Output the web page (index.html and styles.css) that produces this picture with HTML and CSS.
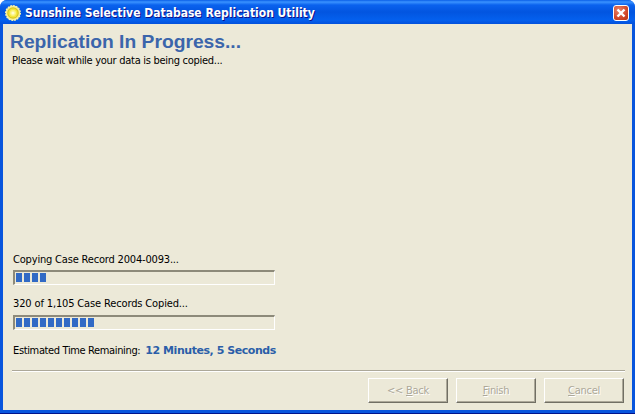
FILE: index.html
```html
<!DOCTYPE html>
<html lang="en">
<head>
<meta charset="utf-8">
<title>Sunshine Selective Database Replication Utility</title>
<link rel="stylesheet" href="styles.css">
</head>
<body>
<div class="window">
  <header class="titlebar">
    <svg class="app-icon" width="16" height="16" viewBox="0 0 16 16">
      <circle cx="8" cy="8" r="7.4" fill="#f4ec9a" stroke="#fff6a8" stroke-width="1.2" stroke-dasharray="1.6 1.3"/>
      <circle cx="8" cy="8" r="5.8" fill="#d9c81c"/>
      <circle cx="8" cy="8" r="4.6" fill="#f4e63c"/>
      <circle cx="8" cy="8" r="3" fill="#fbf47e"/>
      <circle cx="8" cy="8" r="1.6" fill="#fffbd0"/>
    </svg>
    <span class="title">Sunshine Selective Database Replication Utility</span>
    <span class="close">
      <svg width="10" height="10" viewBox="0 0 10 10"><path d="M1.5 1.5 L8.5 8.5 M8.5 1.5 L1.5 8.5" stroke="#fff" stroke-width="2.4" fill="none"/></svg>
    </span>
  </header>
  <main class="client">
    <h1 class="heading">Replication In Progress...</h1>
    <p class="subheading">Please wait while your data is being copied...</p>
    <section class="status">
      <p class="label label-first">Copying Case Record 2004-0093...</p>
      <div class="progress">
        <i></i><i></i><i></i><i></i>
      </div>
      <p class="label label-second">320 of 1,105 Case Records Copied...</p>
      <div class="progress">
        <i></i><i></i><i></i><i></i><i></i><i></i><i></i><i></i><i></i><i></i>
      </div>
      <p class="remaining">
        <span class="label label-time">Estimated Time Remaining:</span>
        <span class="time">12 Minutes, 5 Seconds</span>
      </p>
    </section>
    <footer class="footer">
      <button class="btn" disabled>&lt;&lt; <u>B</u>ack</button>
      <button class="btn" disabled><u>F</u>inish</button>
      <button class="btn" disabled><u>C</u>ancel</button>
    </footer>
  </main>
</div>
</body>
</html>
```
FILE: styles.css
```css
html, body {
  margin: 0;
  padding: 0;
  height: 100%;
  background: #fff;
  overflow: hidden;
}
.window {
  box-sizing: border-box;
  height: 414px;
  width: 635px;
  display: flex;
  flex-direction: column;
  background: #0855dd;
  border-radius: 7px 7px 0 0;
  padding: 0 3px 3px;
  border-bottom: 1px solid #00138c;
}
.titlebar {
  box-sizing: border-box;
  height: 24px;
  flex: none;
  margin: 0 -3px;
  padding: 2px 6px 0 5px;
  display: flex;
  align-items: center;
  gap: 4px;
  border-radius: 7px 7px 0 0;
  background: linear-gradient(#0a5fe8 0, #3a93ff 2px, #0a62ee 5px, #0255e0 12px, #0460ee 20px, #0351dc 24px);
}
.app-icon { flex: none; }
.title {
  flex: 1;
  font: bold 12px "DejaVu Sans Condensed", "DejaVu Sans", sans-serif;
  font-stretch: condensed;
  color: #fff;
  white-space: nowrap;
  text-shadow: 1px 1px 0 #0f1089;
}
.close {
  width: 16px;
  height: 16px;
  flex: none;
  box-sizing: border-box;
  border: 1px solid #fff;
  border-radius: 3px;
  background: radial-gradient(circle at 35% 30%, #e8846a, #d2482a 60%, #b43414);
  display: flex;
  align-items: center;
  justify-content: center;
}
.close svg { display: block; }
.client {
  flex: 1;
  display: flex;
  flex-direction: column;
  min-height: 0;
  background: #ece9d8;
  padding: 0 7px 7px 9px;
}
.heading {
  margin: 6px 0 0 -2px;
  font: bold 19.25px/24px "Liberation Sans", Arial, sans-serif;
  color: #3b65ab;
}
.subheading, .label {
  margin: 0;
  font: 11px/14px "DejaVu Sans Condensed", "DejaVu Sans", sans-serif;
  font-stretch: condensed;
  letter-spacing: -0.28px;
  color: #000;
}
.status {
  margin-top: auto;
  padding: 0 0 0 1px;
  display: flex;
  flex-direction: column;
}
.label-first { margin-bottom: -2px; letter-spacing: -0.18px; }
.label-second { margin-top: 12px; margin-bottom: -1px; letter-spacing: -0.14px; }
.label-time { letter-spacing: -0.36px; }
.progress {
  box-sizing: border-box;
  width: 262px;
  height: 15px;
  margin-top: 5px;
  padding: 1px 2px 2px 1px;
  display: flex;
  gap: 2px;
  border: 1px solid #fff;
  border-top: 2px solid #8d8a7a;
  border-left: 2px solid #8d8a7a;
}
.progress i {
  display: block;
  width: 6px;
  height: 9px;
  background: #316ac5;
}
.remaining {
  margin: 14px 0 12px;
  display: flex;
  gap: 5px;
  align-items: center;
}
.time {
  font: bold 11px/14px "DejaVu Sans", sans-serif;
  letter-spacing: -0.45px;
  color: #2b5ea8;
}
.footer {
  padding: 7px 1px 0 0;
  border-top: 1px solid #aca899;
  box-shadow: inset 0 1px 0 #fff;
  display: flex;
  justify-content: flex-end;
  gap: 8px;
}
.btn {
  width: 80px;
  height: 25px;
  box-sizing: border-box;
  background: #ece9d8;
  border: 1px solid;
  border-color: #fff #716f64 #716f64 #fff;
  box-shadow: inset -1px -1px 0 #aca899;
  font: 11px "DejaVu Sans Condensed", "DejaVu Sans", sans-serif;
  font-stretch: condensed;
  letter-spacing: -0.28px;
  color: #aca899;
  text-shadow: 1px 1px 0 #fff;
  padding: 0;
}
```
